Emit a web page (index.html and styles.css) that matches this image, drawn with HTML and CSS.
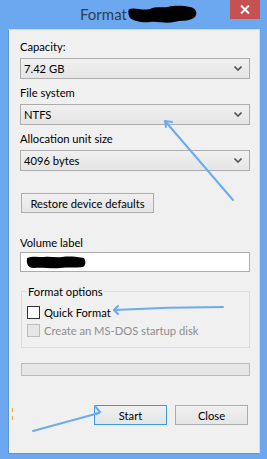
FILE: index.html
```
<!DOCTYPE html>
<html lang="en">
<head>
    <meta charset="UTF-8">
    <meta name="viewport" content="width=device-width, initial-scale=1.0">
    <title>Format</title>
    <link rel="stylesheet" href="styles.css">
</head>
<body>
    <div class="window">
        <div class="titlebar">
            <div class="title">
                <span class="title-text">Format</span>
                <svg class="scribble" width="70" height="19" viewBox="0 0 70 19">
                    <path d="M1 4 C8 2 14 6 22 4 C28 1 34 3 40 2 C48 0 56 1 62 2 C68 3 70 8 67 12 C62 17 52 15 46 17 C38 19 30 16 22 17 C14 18 6 16 2 13 C0 10 0 6 1 4 Z" fill="#000"/>
                </svg>
            </div>
            <div class="close-btn">
                <svg width="10" height="9" viewBox="0 0 10 9">
                    <path d="M1 0.5 L9 8.5 M9 0.5 L1 8.5" stroke="#fff" stroke-width="2"/>
                </svg>
            </div>
        </div>

        <div class="client">
            <div class="field">
                <div class="field-label">Capacity:</div>
                <div class="combo">
                    <span>7.42 GB</span>
                    <svg class="chevron" width="8" height="5" viewBox="0 0 8 5"><path d="M0.5 0.5 L4 4 L7.5 0.5" stroke="#555" stroke-width="1.6" fill="none"/></svg>
                </div>
            </div>
            <div class="field">
                <div class="field-label">File system</div>
                <div class="combo">
                    <span>NTFS</span>
                    <svg class="chevron" width="8" height="5" viewBox="0 0 8 5"><path d="M0.5 0.5 L4 4 L7.5 0.5" stroke="#555" stroke-width="1.6" fill="none"/></svg>
                </div>
            </div>
            <div class="field">
                <div class="field-label">Allocation unit size</div>
                <div class="combo">
                    <span>4096 bytes</span>
                    <svg class="chevron" width="8" height="5" viewBox="0 0 8 5"><path d="M0.5 0.5 L4 4 L7.5 0.5" stroke="#555" stroke-width="1.6" fill="none"/></svg>
                </div>
            </div>

            <div class="btn restore-btn">Restore device defaults</div>

            <div class="volume-label">Volume label</div>
            <div class="text-input">
                <svg width="60" height="14" viewBox="0 0 60 14">
                    <path d="M1 3 C6 1 12 2 18 2 C24 1 30 3 36 2 C44 1 52 2 58 3 C60 6 60 10 57 12 C50 13 42 12 34 13 C26 14 16 12 8 13 C3 13 0 10 1 3 Z" fill="#000"/>
                </svg>
            </div>

            <fieldset class="options">
                <legend>Format options</legend>
                <div class="check-row">
                    <span class="checkbox"></span>
                    <span>Quick Format</span>
                </div>
                <div class="check-row disabled">
                    <span class="checkbox"></span>
                    <span>Create an MS-DOS startup disk</span>
                </div>
            </fieldset>

            <div class="progress"></div>

            <div class="actions">
                <div class="btn action-btn default">Start</div>
                <div class="btn action-btn">Close</div>
            </div>
        </div>

        <!-- annotation arrows drawn over the dialog -->
        <svg class="annotations" width="267" height="459" viewBox="0 0 267 459">
            <g stroke="#6aacf2" stroke-width="2" fill="none" stroke-linecap="round">
                <path d="M233 200 L165 121"/>
                <path d="M165 121 L172 122 M165 121 L166 127"/>
                <path d="M223 307 C190 307 150 308 114 310"/>
                <path d="M114 310 L118 306 M114 310 L118 314"/>
                <path d="M33 431 L99 413"/>
                <path d="M95 406 L100 412 L96 414"/>
            </g>
            <g stroke="#f0a040" stroke-width="1">
                <path d="M12.5 408 V412 M12.5 416 V420"/>
            </g>
        </svg>
    </div>
</body>
</html>
```

FILE: styles.css
```
* {
    box-sizing: border-box;
}

body {
    margin: 0;
    background: #6ca8ef;
    font-family: Lato, "Liberation Sans", sans-serif;
    font-size: 11.2px;
    color: #000;
}

.window {
    position: relative;
    width: 267px;
    height: 459px;
}

.titlebar {
    height: 29px;
    display: flex;
    align-items: flex-start;
}

.title {
    display: flex;
    align-items: center;
    margin-left: 80px;
    margin-top: 5px;
}

.title-text {
    font-size: 15px;
    line-height: 19px;
    color: #2e3f55;
}

.scribble {
    margin-left: 1px;
}

.close-btn {
    margin-left: auto;
    margin-right: 7px;
    width: 30px;
    height: 19px;
    background: #c75050;
    display: flex;
    justify-content: center;
    align-items: center;
}

.client {
    margin-left: 8px;
    width: 252px;
    height: 425px;
    background: #f0f0f0;
    border: 1px solid #dadada;
    border-left-color: #5a95da;
    border-bottom-color: #5a95da;
    padding: 9px 9px 0 11px;
}

.field {
    margin-bottom: 6px;
}

.field-label {
    line-height: 15px;
    margin-bottom: 4px;
}

.combo {
    height: 21px;
    border: 1px solid #acacac;
    background: linear-gradient(to bottom, #f0f0f0, #e5e5e5);
    display: flex;
    align-items: center;
    justify-content: space-between;
    padding: 0 7px 0 3px;
}

.btn {
    height: 20px;
    border: 1px solid #acacac;
    background: linear-gradient(to bottom, #f0f0f0, #e5e5e5);
    display: flex;
    align-items: center;
    justify-content: center;
}

.restore-btn {
    width: 133px;
    margin: 22px 0 0 1px;
}

.volume-label {
    line-height: 15px;
    margin: 22px 0 2px;
}

.text-input {
    height: 20px;
    background: #fff;
    border: 1px solid #acacac;
    display: flex;
    align-items: center;
    padding-left: 5px;
}

.options {
    margin: 12px 0 0 1px;
    width: 229px;
    border: 1px solid #dcdcdc;
    padding: 4px 5px 8px;
}

.options legend {
    padding: 0 1px;
    line-height: 15px;
}

.check-row {
    height: 18px;
    display: flex;
    align-items: center;
    gap: 4px;
}

.checkbox {
    width: 13px;
    height: 13px;
    border: 1px solid #333;
    background: #fff;
}

.check-row.disabled {
    color: #8d8d8d;
}

.check-row.disabled .checkbox {
    border-color: #bcbcbc;
    background: #e6e6e6;
}

.progress {
    margin: 15px 0 0 1px;
    width: 229px;
    height: 13px;
    border: 1px solid #bcbcbc;
    background: #e6e6e6;
}

.actions {
    display: flex;
    justify-content: flex-end;
    gap: 8px;
    margin-top: 29px;
    padding-right: 2px;
}

.action-btn {
    width: 73px;
}

.action-btn.default {
    border-color: #3c98ea;
}

.annotations {
    position: absolute;
    top: 0;
    left: 0;
    pointer-events: none;
}
```
